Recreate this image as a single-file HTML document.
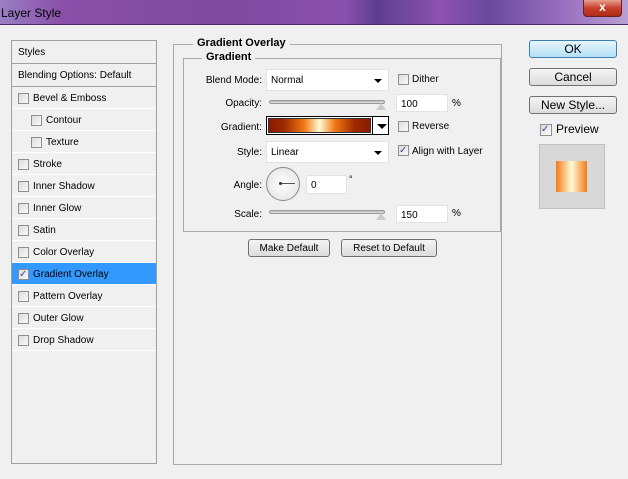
<!DOCTYPE html><html><head><style>
*{margin:0;padding:0;box-sizing:border-box}
body{width:628px;height:479px;background:#f0f0f0;font-family:"Liberation Sans",sans-serif;font-size:11px;color:#000;position:relative;overflow:hidden}
.a{position:absolute}
.title{left:0;top:0;width:628px;height:25px;background:linear-gradient(90deg,#9a7fc4 0%,#8a4fa8 10%,#7d4a9e 35%,#8a50ae 55%,#5b3f8e 60%,#8c52b0 70%,#6a4a9e 78%,#9a70c0 90%,#b7a0d4 100%);border-bottom:1px solid #4a2a6a}
.title span{position:absolute;left:1px;top:6px;font-size:12px;color:#000}
.close{left:583px;top:0;width:39px;height:17px;background:linear-gradient(#e8a090,#c7402c 50%,#b02a18);border:1px solid #6a2020;border-top:none;border-radius:0 0 4px 4px;color:#fff;font-weight:bold;text-align:center;font-size:12px;line-height:15px}
.lp{left:11px;top:40px;width:146px;height:424px;border:1px solid #a0a0a0;background:#f0f0f0}
.row{position:absolute;left:0;width:144px;height:22px;border-bottom:1px solid #fff;line-height:23px;font-size:10px}
.cb{position:absolute;width:11px;height:11px;border:1px solid #8f8f8f;background:linear-gradient(135deg,#dcdcdc,#fafafa)}
.sel{background:#3399ff}
.fs{border:1px solid #a9a9a9}
.lg{position:absolute;background:#f0f0f0;font-weight:bold;padding:0 4px;font-size:11px}
.lbl{position:absolute;text-align:right;font-size:10px}
.inp{position:absolute;background:#fff;border:1px solid #e2e2e2;font-size:10px;padding-left:4px;line-height:19px}
.dd::after{content:"";position:absolute;right:6px;top:9px;border:4px solid transparent;border-top:4px solid #000;border-bottom:none}
.sl{position:absolute;height:4px;border:1px solid #999;border-radius:2px;background:linear-gradient(#bbb,#e0e0e0)}
.btn{position:absolute;border:1px solid #707070;border-radius:3px;background:linear-gradient(#f4f4f4,#dcdcdc);text-align:center;font-size:11px}
</style></head><body>
<div class="a title"><span>Layer Style</span></div>
<div class="a close">x</div>

<div class="a lp">
<div class="row" style="top:0;height:23px;border-bottom:1px solid #a0a0a0;padding-left:6px">Styles</div>
<div class="row" style="top:23px;height:23px;border-bottom:1px solid #a0a0a0;padding-left:6px">Blending Options: Default</div>
<div class="row" style="top:46px"><i class="cb" style="left:6px;top:6px"></i><span style="position:absolute;left:21px">Bevel &amp; Emboss</span></div>
<div class="row" style="top:68px"><i class="cb" style="left:19px;top:6px"></i><span style="position:absolute;left:34px">Contour</span></div>
<div class="row" style="top:90px"><i class="cb" style="left:19px;top:6px"></i><span style="position:absolute;left:34px">Texture</span></div>
<div class="row" style="top:112px"><i class="cb" style="left:6px;top:6px"></i><span style="position:absolute;left:21px">Stroke</span></div>
<div class="row" style="top:134px"><i class="cb" style="left:6px;top:6px"></i><span style="position:absolute;left:21px">Inner Shadow</span></div>
<div class="row" style="top:156px"><i class="cb" style="left:6px;top:6px"></i><span style="position:absolute;left:21px">Inner Glow</span></div>
<div class="row" style="top:178px"><i class="cb" style="left:6px;top:6px"></i><span style="position:absolute;left:21px">Satin</span></div>
<div class="row" style="top:200px"><i class="cb" style="left:6px;top:6px"></i><span style="position:absolute;left:21px">Color Overlay</span></div>
<div class="row sel" style="top:222px"><i class="cb" style="left:6px;top:6px;font-style:normal;font-size:10px;line-height:9px;color:#3a4a9a">✓</i><span style="position:absolute;left:21px">Gradient Overlay</span></div>
<div class="row" style="top:244px"><i class="cb" style="left:6px;top:6px"></i><span style="position:absolute;left:21px">Pattern Overlay</span></div>
<div class="row" style="top:266px"><i class="cb" style="left:6px;top:6px"></i><span style="position:absolute;left:21px">Outer Glow</span></div>
<div class="row" style="top:288px"><i class="cb" style="left:6px;top:6px"></i><span style="position:absolute;left:21px">Drop Shadow</span></div>
</div>

<div class="a fs" style="left:173px;top:44px;width:329px;height:421px"></div>
<div class="lg" style="left:193px;top:37px">Gradient Overlay</div>
<div class="a fs" style="left:183px;top:58px;width:318px;height:174px"></div>
<div class="lg" style="left:202px;top:51px">Gradient</div>

<div class="lbl" style="left:190px;width:72px;top:75px">Blend Mode:</div>
<div class="inp dd" style="left:266px;top:69px;width:123px;height:22px;line-height:21px">Normal</div>
<i class="cb a" style="left:398px;top:74px"></i><div class="a" style="left:412px;top:74px;font-size:10px">Dither</div>

<div class="lbl" style="left:190px;width:72px;top:98px">Opacity:</div>
<div class="sl" style="left:269px;top:100px;width:116px"></div>
<div class="a" style="left:376px;top:98px;border:5px solid transparent;border-bottom:7px solid #ccc;width:0"></div>
<div class="inp" style="left:396px;top:94px;width:52px;height:18px">100</div>
<div class="a" style="left:452px;top:98px;font-size:10px">%</div>

<div class="lbl" style="left:190px;width:72px;top:122px">Gradient:</div>
<div class="a" style="left:266px;top:116px;width:123px;height:19px;border:1px solid #000;background:#fff">
<div class="a" style="left:1px;top:1px;width:103px;height:15px;background:linear-gradient(90deg,#8a1a00,#9c2a00 15%,#f37a16 35%,#fffcd8 50%,#f37a16 65%,#9c2a00 85%,#8a1a00);border:1px solid #333"></div>
<div class="a" style="left:105px;top:0;width:1px;height:17px;background:#000"></div>
<div class="a" style="left:110px;top:7px;border:5px solid transparent;border-top:5px solid #000;border-bottom:none"></div></div>
<i class="cb a" style="left:398px;top:121px"></i><div class="a" style="left:412px;top:121px;font-size:10px">Reverse</div>

<div class="lbl" style="left:190px;width:72px;top:147px">Style:</div>
<div class="inp dd" style="left:266px;top:141px;width:123px;height:22px;line-height:21px">Linear</div>
<i class="cb a" style="left:398px;top:145px;font-style:normal;font-size:10px;line-height:9px;color:#3a4a9a">✓</i><div class="a" style="left:412px;top:146px;font-size:10px">Align with Layer</div>

<div class="lbl" style="left:190px;width:72px;top:180px">Angle:</div>
<div class="a" style="left:266px;top:167px;width:34px;height:34px;border:1px solid #888;border-radius:50%;background:radial-gradient(#fff,#e0e0e0)"><div class="a" style="left:14px;top:15px;width:14px;height:1px;background:#555"></div><div class="a" style="left:12px;top:14px;width:3px;height:3px;border-radius:50%;background:#333"></div></div>
<div class="inp" style="left:306px;top:175px;width:41px;height:19px">0</div>
<div class="a" style="left:349px;top:174px;font-size:9px">°</div>

<div class="lbl" style="left:190px;width:72px;top:209px">Scale:</div>
<div class="sl" style="left:269px;top:210px;width:116px"></div>
<div class="a" style="left:376px;top:208px;border:5px solid transparent;border-bottom:7px solid #ccc;width:0"></div>
<div class="inp" style="left:396px;top:205px;width:52px;height:18px">150</div>
<div class="a" style="left:452px;top:208px;font-size:10px">%</div>

<div class="btn" style="left:248px;top:239px;width:82px;height:18px;line-height:17px;font-size:10px">Make Default</div>
<div class="btn" style="left:341px;top:239px;width:96px;height:18px;line-height:17px;font-size:10px">Reset to Default</div>

<div class="btn" style="left:529px;top:40px;width:88px;height:18px;line-height:16px;font-size:12px;background:linear-gradient(#e6f6fd,#b4e0f6);border-color:#3c7fb1">OK</div>
<div class="btn" style="left:529px;top:68px;width:88px;height:18px;line-height:16px;font-size:12px">Cancel</div>
<div class="btn" style="left:529px;top:96px;width:88px;height:18px;line-height:16px;font-size:12px">New Style...</div>
<i class="cb a" style="left:540px;top:124px;width:12px;height:12px;font-style:normal;font-size:10px;line-height:10px;color:#3a4a9a">✓</i>
<div class="a" style="left:556px;top:122px;font-size:12px">Preview</div>
<div class="a" style="left:539px;top:144px;width:66px;height:65px;background:#d8d8d8;border:1px solid #c0c0c0"><div class="a" style="left:16px;top:16px;width:31px;height:31px;background:linear-gradient(90deg,#f37a16,#fffcd8 50%,#f37a16)"></div></div>
</body></html>
